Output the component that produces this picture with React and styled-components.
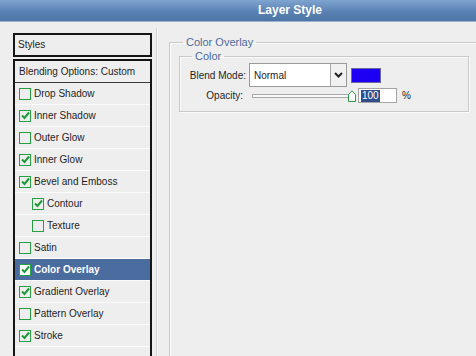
import React from 'react';
import styled, { createGlobalStyle } from 'styled-components';

const GlobalStyle = createGlobalStyle`
  html, body {
    margin: 0;
    padding: 0;
    background: #eeeeee;
  }
  body {
    font-family: "Liberation Sans", Arial, sans-serif;
    font-size: 10px;
    color: #1e1e1e;
  }
`;

const Window = styled.div`
  width: 476px;
  height: 356px;
  overflow: hidden;
  background: #eeeeee;
  display: flex;
  flex-direction: column;
`;

const TitleBar = styled.div`
  height: 21px;
  flex: none;
  background: linear-gradient(#7ea4cf, #5a82b3 55%, #4c75a7);
  border-bottom: 1px solid #9db2cc;
  color: #ffffff;
  font-weight: bold;
  font-size: 12px;
  line-height: 21px;
  text-align: center;
  padding-left: 104px;
`;

const Body = styled.div`
  flex: 1;
  display: flex;
  min-height: 0;
`;

const Sidebar = styled.div`
  width: 139px;
  margin-left: 13px;
  padding-top: 11px;
  display: flex;
  flex-direction: column;
  flex: none;
`;

const Divider = styled.div`
  width: 1px;
  margin: 6px 0 0 4px;
  background: #d2d2d2;
  border-right: 1px solid #fafafa;
  flex: none;
`;

const StylesHeader = styled.div`
  height: 20px;
  border: 2px solid #151515;
  padding-left: 3px;
  line-height: 20px;
`;

const List = styled.div`
  flex: 1;
  margin-top: 2px;
  border: 2px solid #151515;
  border-bottom: none;
`;

const Row = styled.div`
  height: 21px;
  display: flex;
  align-items: center;
  gap: 3px;
  padding-left: ${p => (p.$indent ? 17 : 4)}px;
  border-bottom: 1px solid ${p => (p.$dark ? '#3a3a3a' : '#fbfbfb')};
  background: ${p => (p.$selected ? '#4b6c9f' : 'transparent')};
  color: ${p => (p.$selected ? '#ffffff' : '#1e1e1e')};
  font-weight: ${p => (p.$selected ? 'bold' : 'normal')};
`;

const Box = styled.span`
  width: 10px;
  height: 10px;
  border: 1px solid #26a042;
  background: ${p => (p.$selected ? '#ffffff' : 'transparent')};
  display: flex;
  align-items: center;
  justify-content: center;
  flex: none;
`;

const Content = styled.div`
  flex: 1;
  padding: 14px 0 0 11px;
`;

const Group = styled.fieldset`
  margin: 0;
  padding: 2px 0 0 9px;
  border: 1px solid #c9c9c9;
  box-shadow: inset 1px 1px 0 #fbfbfb;
  width: 330px;
  height: 400px;
  box-sizing: border-box;
`;

const Legend = styled.legend`
  margin-left: ${p => p.$offset}px;
  padding: 0 3px;
  color: #4c6b9c;
  font-size: 11px;
  line-height: 12px;
`;

const Inner = styled.fieldset`
  margin: 0;
  padding: 1px 0 0 0;
  width: 290px;
  height: 62px;
  box-sizing: border-box;
  border: 1px solid #c9c9c9;
  box-shadow: inset 1px 1px 0 #fbfbfb, 1px 1px 0 #fbfbfb;
`;

const Form = styled.div`
  display: grid;
  grid-template-columns: 66px auto;
  column-gap: 3px;
  row-gap: 1px;
  align-items: center;
`;

const Label = styled.div`
  text-align: right;
  padding-right: ${p => p.$pad || 0}px;
`;

const Line = styled.div`
  display: flex;
  align-items: center;
`;

const Select = styled.div`
  width: 96px;
  height: 22px;
  border: 1px solid #9a9a9a;
  background: #ffffff;
  display: flex;
  align-items: stretch;
`;

const SelectText = styled.div`
  flex: 1;
  padding-left: 4px;
  line-height: 23px;
`;

const SelectButton = styled.div`
  width: 15px;
  border-left: 1px solid #a8a8a8;
  background: #f1f1f1;
  display: flex;
  align-items: center;
  justify-content: center;
`;

const Swatch = styled.div`
  width: 28px;
  height: 13px;
  margin-left: 4px;
  background: #1d00f4;
  border: 1px solid #6a6a9a;
`;

const Track = styled.div`
  width: 98px;
  height: 2px;
  margin-left: 3px;
  border: 1px solid #a9a9a9;
  background: #f8f8f8;
`;

const Thumb = styled.svg`
  margin-left: -4px;
  margin-top: 1px;
`;

const Field = styled.div`
  width: 35px;
  height: 13px;
  margin-left: 2px;
  border: 1px solid #a4a4a4;
  background: #ffffff;
  padding-left: 2px;
  display: flex;
  align-items: center;
`;

const Selection = styled.span`
  background: #2e4f8c;
  color: #ffffff;
  line-height: 12px;
  padding: 0 1px;
`;

const Percent = styled.span`
  margin-left: 5px;
`;

const Check = () => (
  <svg width="9" height="9" viewBox="0 0 9 9">
    <path d="M1 4.5 L3.5 7 L8 1.5" fill="none" stroke="#1f9a3a" strokeWidth="2" />
  </svg>
);

const items = [
  { name: 'Drop Shadow', on: false },
  { name: 'Inner Shadow', on: true },
  { name: 'Outer Glow', on: false },
  { name: 'Inner Glow', on: true },
  { name: 'Bevel and Emboss', on: true },
  { name: 'Contour', on: true, indent: true },
  { name: 'Texture', on: false, indent: true },
  { name: 'Satin', on: false },
  { name: 'Color Overlay', on: true, selected: true },
  { name: 'Gradient Overlay', on: true },
  { name: 'Pattern Overlay', on: false },
  { name: 'Stroke', on: true },
];

export default function App() {
  return (
    <Window>
      <GlobalStyle />
      <TitleBar>Layer Style</TitleBar>
      <Body>
        <Sidebar>
          <StylesHeader>Styles</StylesHeader>
          <List>
            <Row $dark>Blending Options: Custom</Row>
            {items.map(it => (
              <Row key={it.name} $indent={it.indent} $selected={it.selected}>
                <Box $selected={it.selected}>{it.on && <Check />}</Box>
                {it.name}
              </Row>
            ))}
          </List>
        </Sidebar>
        <Divider />
        <Content>
          <Group>
            <Legend $offset={4}>Color Overlay</Legend>
            <Inner>
              <Legend $offset={12}>Color</Legend>
              <Form>
                <Label>Blend Mode:</Label>
                <Line>
                  <Select>
                    <SelectText>Normal</SelectText>
                    <SelectButton>
                      <svg width="9" height="6" viewBox="0 0 9 6">
                        <path d="M1 1 L4.5 4.5 L8 1" fill="none" stroke="#222" strokeWidth="2" />
                      </svg>
                    </SelectButton>
                  </Select>
                  <Swatch />
                </Line>
                <Label $pad={3}>Opacity:</Label>
                <Line>
                  <Track />
                  <Thumb width="8" height="12" viewBox="0 0 8 12">
                    <path d="M0.5 11.5 V4.5 L4 0.8 L7.5 4.5 V11.5 Z" fill="#ffffff" stroke="#2e9c45" />
                  </Thumb>
                  <Field>
                    <Selection>100</Selection>
                  </Field>
                  <Percent>%</Percent>
                </Line>
              </Form>
            </Inner>
          </Group>
        </Content>
      </Body>
    </Window>
  );
}
